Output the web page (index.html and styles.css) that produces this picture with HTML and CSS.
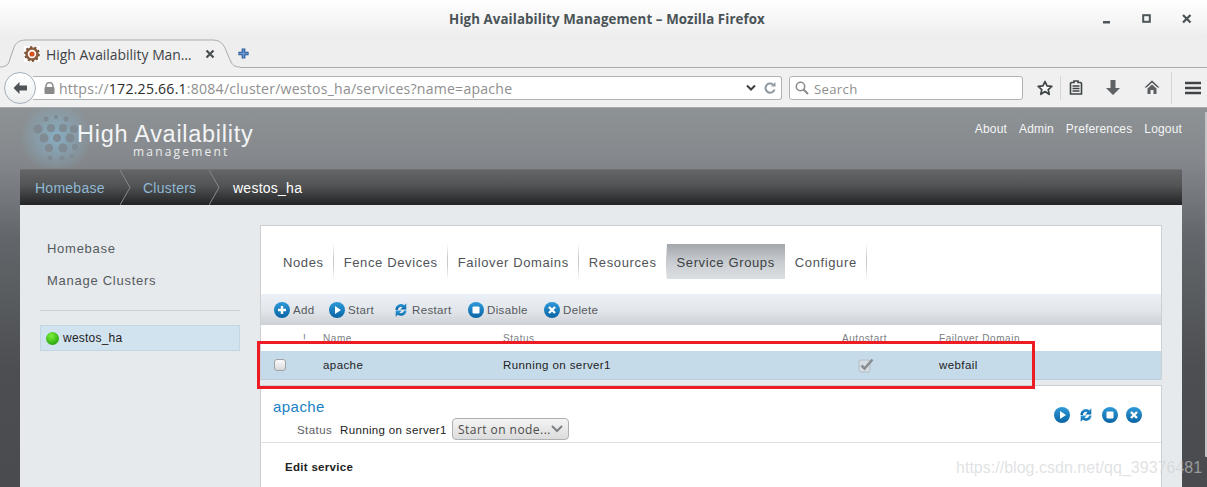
FILE: index.html
```html
<!DOCTYPE html>
<html lang="en">
<head>
<meta charset="utf-8">
<title>High Availability Management</title>
<link rel="stylesheet" href="styles.css">
</head>
<body>
<svg class="defs" width="0" height="0" aria-hidden="true">
  <defs>
    <linearGradient id="blue" x1="0" y1="0" x2="0" y2="1"><stop offset="0" stop-color="#2f9ad8"/><stop offset="1" stop-color="#0a64a4"/></linearGradient>
    <radialGradient id="green" cx=".4" cy=".3" r=".8"><stop offset="0" stop-color="#7cf03c"/><stop offset="1" stop-color="#1d9c08"/></radialGradient>
    <symbol id="i-add" viewBox="0 0 16 16"><circle cx="8" cy="8" r="8" fill="url(#blue)"/><path d="M8 4v8M4 8h8" stroke="#fff" stroke-width="2.4"/></symbol>
    <symbol id="i-start" viewBox="0 0 16 16"><circle cx="8" cy="8" r="8" fill="url(#blue)"/><path d="M6 4l6 4-6 4z" fill="#fff"/></symbol>
    <symbol id="i-restart" viewBox="0 0 16 16"><path d="M2.500 8A5.500 5.500 0 0 1 11.300 3.300L13.300 1.200v6.300H7.200l2.300-2.300A3.200 3.200 0 0 0 4.900 8z" fill="url(#blue)"/><path d="M13.500 8.500A5.500 5.500 0 0 1 4.700 12.700L2.700 14.800V8.500h6.100l-2.300 2.300A3.200 3.200 0 0 0 11.100 8.500z" fill="url(#blue)"/></symbol>
    <symbol id="i-stop" viewBox="0 0 16 16"><circle cx="8" cy="8" r="8" fill="url(#blue)"/><rect x="4.500" y="4.500" width="7" height="7" rx="1" fill="#fff"/></symbol>
    <symbol id="i-del" viewBox="0 0 16 16"><circle cx="8" cy="8" r="8" fill="url(#blue)"/><path d="M5 5l6 6M11 5l-6 6" stroke="#fff" stroke-width="2.400"/></symbol>
  </defs>
</svg>

<div class="browser">
  <header class="titlebar">
    <div class="title">High Availability Management – Mozilla Firefox</div>
    <div class="winbtns">
      <svg width="10" height="10" viewBox="0 0 10 10"><rect x="1" y="7" width="7" height="2.500" fill="#4d5558"/></svg>
      <svg width="10" height="10" viewBox="0 0 10 10"><rect x="1.200" y="1.200" width="6.600" height="6.600" fill="none" stroke="#4d5558" stroke-width="2"/></svg>
      <svg width="10" height="10" viewBox="0 0 10 10"><path d="M1 1l7.500 7.500M8.500 1L1 8.500" stroke="#4d5558" stroke-width="2.300"/></svg>
    </div>
  </header>
  <div class="tabstrip">
    <div class="tab">
      <svg class="tab-shape" width="240" height="29" viewBox="0 0 240 29"><path d="M0 28C5 28 8 26 9 23L13 11C15 4 19 1 26 1L213 1C222 1 225 8 227 14L231 23C233 27 236 28 240 28V29H0z" fill="#f0f0f0"/><path d="M0 28C5 28 8 26 9 23L13 11C15 4 19 1 26 1L213 1C222 1 225 8 227 14L231 23C233 27 236 28 240 28" fill="none" stroke="#a9abac"/></svg>
      <svg class="favicon" width="16" height="16" viewBox="0 0 16 16"><rect width="16" height="16" fill="#fff"/><circle cx="8" cy="8" r="5.500" fill="none" stroke="#8a5a3a" stroke-width="2.600"/><circle cx="8" cy="8" r="7" fill="none" stroke="#75543c" stroke-width="1.800" stroke-dasharray="2.200 2.200"/><circle cx="8" cy="8" r="2.600" fill="#d8501c"/></svg>
      <span class="tab-label">High Availability Man…</span>
      <svg class="tab-x" width="10" height="10" viewBox="0 0 10 10"><path d="M1.500 1.500l7 7M8.500 1.500l-7 7" stroke="#4a4f52" stroke-width="2.200"/></svg>
    </div>
    <svg class="newtab" width="13" height="13" viewBox="0 0 14 14"><path d="M7 1.500v11M1.500 7h11" stroke="#2a5a9c" stroke-width="4"/><path d="M7 2.500v9M2.500 7h9" stroke="#6f9ad6" stroke-width="1.600"/></svg>
  </div>
  <nav class="navbar">
    <div class="urlwrap">
      <div class="back"><svg width="16" height="14" viewBox="0 0 16 14"><path d="M7.500 1L1.500 7l6 6V9.500H15v-5H7.500z" fill="#4e5356"/></svg></div>
      <div class="urlbar">
        <svg class="lock" width="11" height="12" viewBox="0 0 11 12"><path d="M2 5.500V4a3.500 3.500 0 0 1 7 0v1.500" fill="none" stroke="#8a8a8a" stroke-width="1.500"/><rect x="0.500" y="5" width="10" height="7" rx="1" fill="#8a8a8a"/></svg>
        <span class="url"><span class="dim">https://</span>172.25.66.1<span class="dim">:8084/cluster/westos_ha/services?name=apache</span></span>
        <svg class="chev" width="10" height="8" viewBox="0 0 10 8"><path d="M1 1.500l4 4 4-4" fill="none" stroke="#3c3f41" stroke-width="2"/></svg>
        <svg class="reload" width="12" height="12" viewBox="0 0 12 12"><path d="M10.500 7.500A4.600 4.600 0 1 1 9 2.500" fill="none" stroke="#8f9aa3" stroke-width="2"/><path d="M7 4.500h4.500V0z" fill="#8f9aa3"/></svg>
      </div>
    </div>
    <div class="searchbar">
      <svg width="14" height="14" viewBox="0 0 14 14"><circle cx="5.500" cy="5.500" r="4.200" fill="none" stroke="#8a8a8a" stroke-width="1.500"/><path d="M8.500 8.500l4.500 4.500" stroke="#8a8a8a" stroke-width="2"/></svg>
      <span class="search-text">Search</span>
    </div>
    <div class="tools">
      <svg class="t-star" width="16" height="16" viewBox="0 0 16 16"><path d="M8 1.500l2 4.400 4.800.5-3.600 3.200 1 4.700L8 11.500l-4.200 2.800 1-4.700L1.200 6.400 6 5.900z" fill="#fff" stroke="#3f4447" stroke-width="1.700" stroke-linejoin="round"/></svg>
      <span class="t-sep"></span>
      <svg class="t-clip" width="14" height="15" viewBox="0 0 14 15"><path d="M5 2.500V1h4v1.500h2.500a1 1 0 0 1 1 1V14H1.500V3.500a1 1 0 0 1 1-1z" fill="none" stroke="#3f4447" stroke-width="1.600"/><path d="M3.500 6h7M3.500 8.500h7M3.500 11h7" stroke="#3f4447" stroke-width="1.500"/></svg>
      <svg class="t-down" width="14" height="15" viewBox="0 0 14 15"><path d="M4.500 0h5v8H14l-7 7-7-7h4.500z" fill="#5f6365"/></svg>
      <svg class="t-home" width="16" height="15" viewBox="0 0 16 15"><path d="M8 .5L.5 7.500h2L8 2.500l5.500 5h2z" fill="#4a4e50"/><path d="M3.500 8.500L8 4.500l4.500 4V14H9.500v-4h-3v4h-3z" fill="#5b5f61"/></svg>
      <span class="t-sep t-sep2"></span>
      <svg class="t-menu" width="16" height="14" viewBox="0 0 16 14"><path d="M0 2h16M0 7h16M0 12h16" stroke="#3f4447" stroke-width="2.400"/></svg>
    </div>
  </nav>

  <main class="page">
    <header class="masthead">
      <div class="brand">
        <svg class="logo" width="72" height="60" viewBox="0 0 72 60">
          <defs><radialGradient id="halo"><stop offset="0" stop-color="#86b4cc" stop-opacity=".85"/><stop offset="1" stop-color="#86b4cc" stop-opacity="0"/></radialGradient></defs>
          <circle cx="36" cy="29" r="36" fill="url(#halo)"/>
          <g fill="#7f8a92">
            <circle cx="36" cy="9" r="2"/><circle cx="26" cy="11" r="2.500"/><circle cx="46" cy="11" r="2.500"/>
            <circle cx="18" cy="21" r="4.500"/><circle cx="31" cy="20" r="4"/><circle cx="43" cy="20" r="4"/><circle cx="54" cy="21" r="4"/>
            <circle cx="24" cy="30" r="4.500"/><circle cx="37" cy="30" r="4"/><circle cx="50" cy="30" r="4.500"/>
            <circle cx="29" cy="40" r="4"/><circle cx="43" cy="40" r="4.500"/><circle cx="55" cy="39" r="3"/>
            <circle cx="30" cy="50" r="2.500"/><circle cx="42" cy="50" r="2.500"/><circle cx="52" cy="48" r="2"/>
          </g>
        </svg>
        <div class="brand-text">
          <div class="brand-main">High Availability</div>
          <div class="brand-sub">management</div>
        </div>
      </div>
      <div class="toplinks"><a>About</a><a>Admin</a><a>Preferences</a><a>Logout</a></div>
    </header>

    <div class="shell">
      <div class="crumbs">
        <a class="crumb c1">Homebase</a>
        <svg class="sep" width="12" height="35" viewBox="0 0 12 35"><path d="M0 0l10 17.500L0 35" fill="none" stroke="#8a8a8a"/></svg>
        <a class="crumb c2">Clusters</a>
        <svg class="sep" width="12" height="35" viewBox="0 0 12 35"><path d="M0 0l10 17.500L0 35" fill="none" stroke="#8a8a8a"/></svg>
        <span class="crumb cur">westos_ha</span>
      </div>

      <div class="content">
        <aside class="sidebar">
          <ul class="sidenav"><li>Homebase</li><li>Manage Clusters</li></ul>
          <div class="rule"></div>
          <div class="cluster"><svg width="13" height="13" viewBox="0 0 14 14"><circle cx="7" cy="7" r="7" fill="url(#green)"/></svg><span>westos_ha</span></div>
        </aside>

        <section class="panel">
          <div class="box list">
            <div class="tabs">
              <a class="t">Nodes</a><a class="t">Fence Devices</a><a class="t">Failover Domains</a><a class="t">Resources</a><a class="t active">Service Groups</a><a class="t">Configure</a>
            </div>
            <div class="actions">
              <span class="act a1"><svg width="16" height="16"><use href="#i-add"/></svg>Add</span>
              <span class="act a2"><svg width="16" height="16"><use href="#i-start"/></svg>Start</span>
              <span class="act a3"><svg width="16" height="16"><use href="#i-restart"/></svg>Restart</span>
              <span class="act a4"><svg width="16" height="16"><use href="#i-stop"/></svg>Disable</span>
              <span class="act a5"><svg width="16" height="16"><use href="#i-del"/></svg>Delete</span>
            </div>
            <div class="grid head">
              <span class="c-check"></span><span class="c-bang">!</span><span>Name</span><span>Status</span><span>Autostart</span><span>Failover Domain</span>
            </div>
            <div class="grid row">
              <span class="c-check"><span class="checkbox"></span></span><span class="c-bang"></span><span>apache</span><span>Running on server1</span>
              <span class="c-auto"><svg width="16" height="15" viewBox="0 0 16 15"><rect x="1" y="2" width="11" height="12" rx="2" fill="#d6dee4" stroke="#b4bcc2"/><path d="M3.500 7.500l3 3L14.500 1.500" fill="none" stroke="#888f94" stroke-width="2.600"/></svg></span>
              <span>webfail</span>
            </div>
          </div>

          <div class="box detail">
            <div class="detail-head">
              <div class="detail-info">
                <h2>apache</h2>
                <div class="status-line">
                  <span class="st-label">Status</span>
                  <span class="st-value">Running on server1</span>
                  <span class="select">Start on node...<svg width="12" height="8" viewBox="0 0 12 8"><path d="M1 1l5 5 5-5" fill="none" stroke="#7c8286" stroke-width="2"/></svg></span>
                </div>
              </div>
              <div class="detail-icons">
                <svg width="16" height="16"><use href="#i-start"/></svg>
                <svg width="16" height="16"><use href="#i-restart"/></svg>
                <svg width="16" height="16"><use href="#i-stop"/></svg>
                <svg width="16" height="16"><use href="#i-del"/></svg>
              </div>
            </div>
            <div class="edit">Edit service</div>
          </div>
        </section>
      </div>
    </div>
  </main>
</div>

<div class="scrollthumb"></div>
<div class="redbox"></div>
<div class="watermark">https://blog.csdn.net/qq_39376481</div>
</body>
</html>
```
FILE: styles.css
```css
* { box-sizing: border-box; }
html, body { margin: 0; padding: 0; height: 487px; overflow: hidden; }
body { position: relative; font-family: "Liberation Sans", Arial, sans-serif; background: #fff; }
.defs { position: absolute; }
svg { display: block; flex: none; }

.browser { display: flex; flex-direction: column; height: 487px; overflow: hidden; }
.titlebar { height: 38px; flex: none; position: relative; display: flex; justify-content: center; align-items: center; padding: 0 0 1px 7px; background: linear-gradient(#ffffff, #ededed); }
.title { font: 700 13.300px "Open Sans", "Noto Sans", sans-serif; color: #4a5356; letter-spacing: .1px; }
.winbtns { position: absolute; right: 15px; top: 14px; display: flex; gap: 30px; }

.tabstrip { height: 30px; flex: none; display: flex; align-items: flex-end; padding-left: 13px; background: #eeeeee; border-bottom: 1px solid #a9abac; position: relative; }
.tab { width: 217px; height: 29px; margin-bottom: -1px; display: flex; align-items: center; padding: 0 0 0 11px; position: relative; }
.tab-shape { position: absolute; left: -13px; top: 0; }
.favicon, .tab-label, .tab-x { position: relative; }
.favicon { margin-right: 6px; }
.tab-label { font: 13.900px "Open Sans", "Noto Sans", sans-serif; color: #3f4447; white-space: nowrap; width: 159px; padding-top: 2px; }
.newtab { margin: 0 0 7px 7px; }

.navbar { height: 40px; flex: none; display: flex; align-items: center; background: #f0f0f0; border-bottom: 1px solid #a9abac; padding: 0 0 0 4px; }
.urlwrap { display: flex; align-items: center; width: 778px; position: relative; }
.back { width: 32px; height: 32px; border-radius: 50%; background: linear-gradient(#ffffff, #eceded); border: 1px solid #a3b0bb; display: flex; align-items: center; justify-content: center; position: relative; z-index: 1; flex: none; }
.urlbar { flex: 1; height: 24px; margin-left: -3px; background: #fff; border: 1px solid #b0b2b3; border-left: 0; border-radius: 0 3px 3px 0; display: flex; align-items: center; padding: 0 5px 0 11px; }
.lock { margin-right: 4px; }
.url { flex: 1; font: 14.100px "Open Sans", "Noto Sans", sans-serif; color: #2c2c2c; white-space: nowrap; letter-spacing: .22px; padding-top: 2px; }
.dim { color: #8f8f8f; }
.chev { margin-right: 8px; }
.searchbar { width: 234px; height: 24px; margin-left: 7px; background: #fff; border: 1px solid #b0b2b3; border-radius: 3px; display: flex; align-items: center; gap: 5px; padding-left: 5px; font: 13.200px "Open Sans", "Noto Sans", sans-serif; color: #8f8f8f; letter-spacing: .3px; }
.search-text { padding-top: 2px; }
.tools { display: flex; align-items: center; margin-left: 14px; flex: 1; }
.t-sep { width: 1px; height: 24px; background: #d4d6d7; margin-left: 7px; }
.t-sep2 { height: 32px; margin-left: 11px; }
.t-clip { margin-left: 8px; }
.t-down { margin-left: 23px; }
.t-home { margin-left: 24px; }
.t-menu { margin-left: 13px; }

.page { flex: 1; min-height: 0; background: linear-gradient(#8d9295 0, #85898d 50px, #62666a 130px, #4c4e51 260px, #4a4b4e 100%); padding: 0 25px 0 20px; }
.masthead { height: 61px; display: flex; justify-content: space-between; color: #fff; }
.brand { display: flex; position: relative; }
.logo { position: absolute; left: 0; top: 0; }
.brand-text { margin-left: 57px; padding-top: 13px; position: relative; }
.brand-main { font: 23.500px/26px "Liberation Sans", Arial, sans-serif; color: #f3f4f5; letter-spacing: .72px; white-space: nowrap; }
.brand-sub { font: 12px/10px "Open Sans", "Noto Sans", sans-serif; color: #eceded; letter-spacing: 2.200px; margin: 0 0 0 56px; }
.toplinks { display: flex; gap: 12px; padding-top: 14px; font-size: 12px; line-height: 15px; color: #f4f5f5; letter-spacing: .16px; }

.shell { width: 1162px; }
.crumbs { height: 36px; display: flex; align-items: center; padding-left: 15px; background: linear-gradient(#646566, #525354 45%, #222324); border-top: 1px solid #707172; font-size: 14px; letter-spacing: .25px; }
.crumb { white-space: nowrap; }
.c1, .c2 { color: #8fb8d4; }
.cur { color: #fff; margin-left: 12px; }
.c1 { width: 85px; }
.c2 { width: 66px; margin-left: 11px; }

.content { display: flex; align-items: flex-start; background: #e7eaed; height: 282px; }
.sidebar { width: 240px; flex: none; padding: 0 0 0 20px; }
.sidenav { list-style: none; margin: 0; padding: 28px 0 0 7px; font-size: 13px; line-height: 32px; letter-spacing: .73px; color: #555a5e; }
.rule { height: 1px; background: #ccd0d3; margin-top: 13px; width: 200px; }
.cluster { width: 200px; height: 26px; margin-top: 14px; display: flex; align-items: center; gap: 4px; padding-left: 5px; background: #d2e3f0; border: 1px solid #c3d6e4; font-size: 12px; letter-spacing: .22px; color: #222; }

.panel { flex: 1; padding: 20px 20px 0 0; min-width: 0; }
.box { background: #fff; border: 1px solid #ccd0d3; }
.list { border-bottom: 0; }
.tabs { height: 68px; display: flex; padding: 18px 0 0 12px; align-items: flex-start; }
.t { height: 35px; padding: 0 9px 0 10px; line-height: 37px; font-size: 13px; letter-spacing: .62px; color: #4f5458; border-right: 1px solid; border-image: linear-gradient(transparent, #c8cbce 40%, #c8cbce 60%, transparent) 1; white-space: nowrap; }
.t.active { background: linear-gradient(#a3a7ab, #c8ccd0 50%, #dcdfe2); color: #3c4043; padding: 0 10px; border-right: 0; }
.actions { height: 31px; display: flex; align-items: center; background: linear-gradient(#ecf1f8, #e2e6ea 55%, #cdd1d5); font-size: 11.500px; letter-spacing: .35px; color: #55595c; }
.act { display: flex; align-items: center; gap: 3px; }
.a1 { margin-left: 13px; width: 55px; }
.a2 { width: 64px; }
.a3 { width: 75px; }
.a4 { width: 76px; }
.a5 { width: 76px; }

.grid { display: grid; grid-template-columns: 29px 33px 180px 339px 97px 1fr; align-items: center; }
.grid.head { height: 26px; font-size: 10px; letter-spacing: .55px; color: #7a7e82; }
.c-bang { padding-left: 13px; }
.grid.row { height: 29px; background: #c6dbea; border-bottom: 1px solid #bccdd9; font-size: 11.500px; letter-spacing: .42px; color: #222; }
.c-check { padding-left: 13px; }
.checkbox { display: block; width: 12px; height: 12px; background: linear-gradient(#fbfbfb, #d8d8d8); border: 1px solid #9fa3a6; border-radius: 3px; }
.c-auto { padding-left: 16px; }

.detail { margin-top: 5px; height: 200px; border-bottom: 0; }
.detail-head { height: 57px; display: flex; justify-content: space-between; border-bottom: 1px solid #dde0e3; }
.detail-info { padding: 13px 0 0 12px; }
h2 { margin: 0; font-size: 15px; line-height: 16px; font-weight: 400; letter-spacing: .45px; color: #1a82c4; }
.status-line { display: flex; align-items: center; margin-top: 3px; font-size: 11.500px; letter-spacing: .35px; }
.st-label { margin-left: 24px; width: 43px; color: #5c6064; letter-spacing: .45px; padding-top: 2px; }
.st-value { color: #222; width: 112px; white-space: nowrap; padding-top: 2px; }
.select { width: 117px; height: 22px; background: linear-gradient(#f4f4f4, #dcdcdc); border: 1px solid #aeb1b3; border-radius: 4px; display: flex; align-items: center; justify-content: space-between; padding: 0 5px; font: 12px "Open Sans", "Noto Sans", sans-serif; letter-spacing: .45px; color: #4a4a4a; white-space: nowrap; }
.detail-icons { display: flex; gap: 8px; padding: 21px 19px 0 0; }
.edit { padding: 18px 0 0 24px; font-size: 11.500px; font-weight: 700; color: #222; letter-spacing: .3px; }

.scrollthumb { position: absolute; left: 1205px; top: 112px; width: 2px; height: 345px; background: #c4c6c8; border-radius: 1px 0 0 1px; }
.redbox { position: absolute; left: 257px; top: 341px; width: 778px; height: 48px; border: 3px solid #ed1c24; }
.watermark { position: absolute; left: 956px; top: 458px; font-size: 16px; line-height: 20px; color: rgba(205, 208, 210, .62); white-space: nowrap; letter-spacing: .02px; }
```
